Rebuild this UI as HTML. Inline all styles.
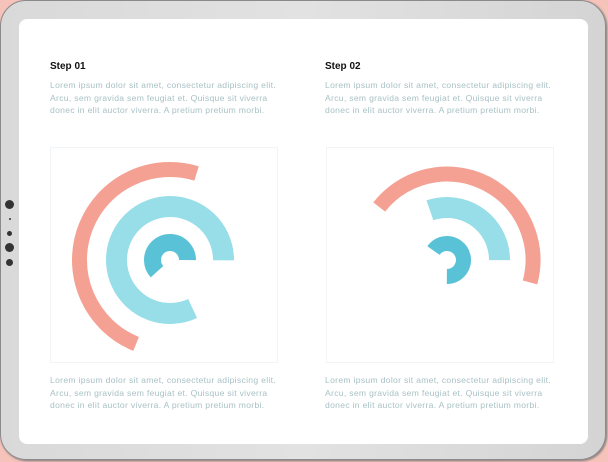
<!DOCTYPE html>
<html><head><style>
html,body{margin:0;padding:0;width:608px;height:462px;overflow:hidden;background:#fff;font-family:"Liberation Sans",sans-serif;}
.bg{position:absolute;inset:0;background:#f6c3bb;}
.frame{position:absolute;left:0;top:0;width:604px;height:458px;border:1px solid #8a8a8a;border-radius:26px;background:linear-gradient(90deg,#d9d9d9,#e2e2e2 50%,#d4d4d4);box-shadow:1px 1px 2px #777;}
.screen{position:absolute;left:19px;top:19px;width:569px;height:425px;background:#fff;border-radius:8px;}
.dot{position:absolute;background:#333;border-radius:50%;}
.t{position:absolute;font-size:10px;font-weight:bold;color:#111;}
.p{position:absolute;font-size:8.6px;line-height:12.5px;color:#a8c1c5;white-space:nowrap;letter-spacing:0.3px;}
.box{position:absolute;border:1px solid #f2f5f7;width:226px;height:214px;top:147px;}
</style></head><body>
<div class="bg"></div>
<div class="frame"></div>
<div class="screen"></div>
<div class="dot" style="left:5px;top:200px;width:9px;height:9px"></div>
<div class="dot" style="left:9px;top:218px;width:2px;height:2px"></div>
<div class="dot" style="left:7px;top:231px;width:5px;height:5px"></div>
<div class="dot" style="left:5px;top:243px;width:9px;height:9px"></div>
<div class="dot" style="left:6px;top:259px;width:7px;height:7px"></div>

<div class="t" style="left:50px;top:61px">Step 01</div>
<div class="p" style="left:50px;top:79px">Lorem ipsum dolor sit amet, consectetur adipiscing elit.<br>Arcu, sem gravida sem feugiat et. Quisque sit viverra<br>donec in elit auctor viverra. A pretium pretium morbi.</div>
<div class="t" style="left:325px;top:61px">Step 02</div>
<div class="p" style="left:325px;top:79px">Lorem ipsum dolor sit amet, consectetur adipiscing elit.<br>Arcu, sem gravida sem feugiat et. Quisque sit viverra<br>donec in elit auctor viverra. A pretium pretium morbi.</div>
<div class="box" style="left:50px"></div>
<div class="box" style="left:326px"></div>
<div class="p" style="left:50px;top:374px">Lorem ipsum dolor sit amet, consectetur adipiscing elit.<br>Arcu, sem gravida sem feugiat et. Quisque sit viverra<br>donec in elit auctor viverra. A pretium pretium morbi.</div>
<div class="p" style="left:325px;top:374px">Lorem ipsum dolor sit amet, consectetur adipiscing elit.<br>Arcu, sem gravida sem feugiat et. Quisque sit viverra<br>donec in elit auctor viverra. A pretium pretium morbi.</div>

<svg width="608" height="462" style="position:absolute;left:0;top:0" fill="none">
<g transform="translate(170 260)">
<circle r="17.5" stroke="#5ac2d7" stroke-width="17" stroke-dasharray="67.8 200" transform="rotate(-222)"/>
<circle r="53.5" stroke="#98dee8" stroke-width="21" stroke-dasharray="275.5 400" transform="rotate(-295)"/>
<circle r="90.5" stroke="#f4a194" stroke-width="15" stroke-dasharray="276.4 600" transform="rotate(-248)"/>
</g>
<g transform="translate(447 260)">
<circle r="16.5" stroke="#5ac2d7" stroke-width="15" stroke-dasharray="67.7 200" transform="rotate(-145)"/>
<circle r="52.5" stroke="#98dee8" stroke-width="21" stroke-dasharray="99.9 400" transform="rotate(-109)"/>
<circle r="86" stroke="#f4a194" stroke-width="15" stroke-dasharray="235.7 600" transform="rotate(-142)"/>
</g>
</svg>
</body></html>
